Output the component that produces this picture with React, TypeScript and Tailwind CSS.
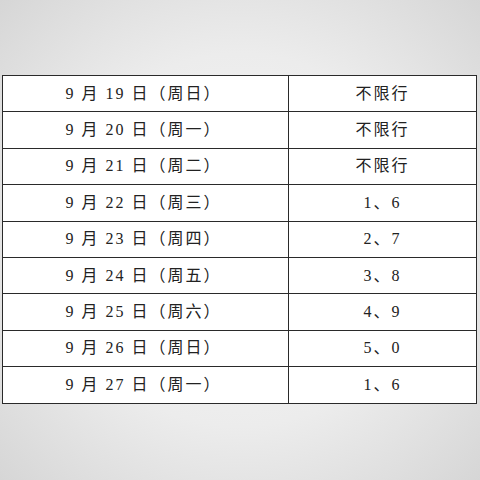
const rows: [string, string][] = [
  ['9 月 19 日（周日）', '不限行'],
  ['9 月 20 日（周一）', '不限行'],
  ['9 月 21 日（周二）', '不限行'],
  ['9 月 22 日（周三）', '1、6'],
  ['9 月 23 日（周四）', '2、7'],
  ['9 月 24 日（周五）', '3、8'],
  ['9 月 25 日（周六）', '4、9'],
  ['9 月 26 日（周日）', '5、0'],
  ['9 月 27 日（周一）', '1、6'],
];

const App = () => {
  return (
    <div className="w-[480px] h-[480px] overflow-hidden bg-[radial-gradient(ellipse_at_center,#f7f7f7_0%,#ececec_55%,#d6d6d6_100%)] pt-[75px] pl-[2px] font-['Liberation_Serif','Noto_Sans_CJK_SC',serif] text-[#222]">
      <table className="w-[475px] border-collapse bg-white border-[1.5px] border-[#2a2a2a]">
        <tbody>
          {rows.map(([date, rule]) => (
            <tr key={date} className="h-[36.4px]">
              <td className="w-[286px] border-[1.5px] border-[#2a2a2a] text-center text-[16px] tracking-[2px] whitespace-pre pr-[4px]">
                {date}
              </td>
              <td className="border-[1.5px] border-[#2a2a2a] text-center text-[16px] tracking-[2px] whitespace-pre">
                {rule}
              </td>
            </tr>
          ))}
        </tbody>
      </table>
    </div>
  );
};

export default App;
